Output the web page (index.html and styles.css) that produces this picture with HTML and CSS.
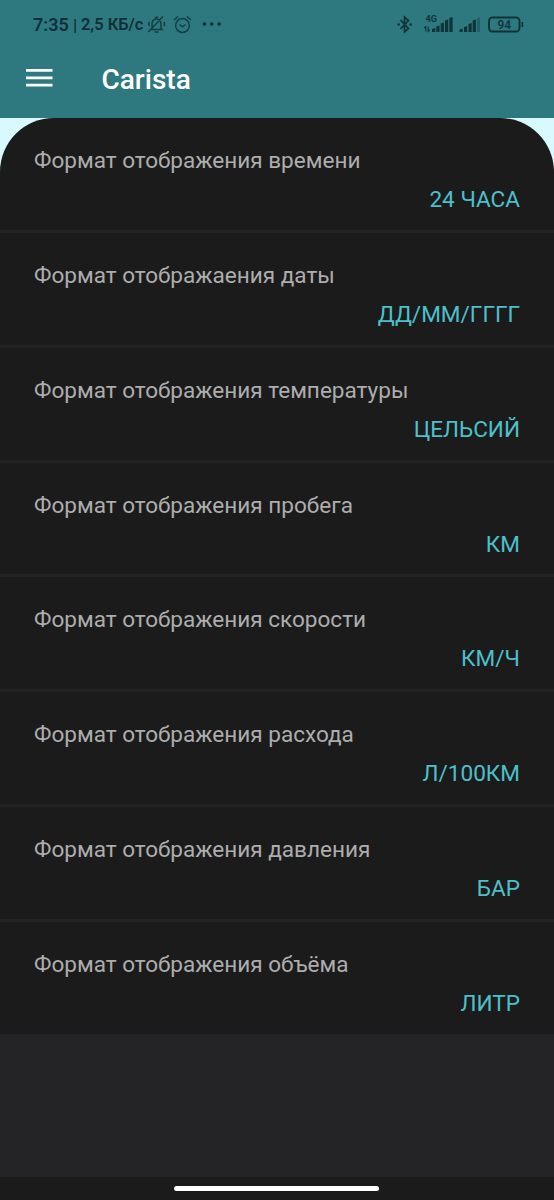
FILE: index.html
```
<!DOCTYPE html>
<html lang="ru">
<head>
<meta charset="utf-8">
<title>Carista</title>
<link rel="stylesheet" href="styles.css">
</head>
<body>
<header class="header">
  <div class="status">
    <span class="clock">7:35</span><span class="bar">|</span><span class="speed">2,5 КБ/с</span>
    <svg class="alerts" width="80" height="24" viewBox="146 13 80 24" fill="none" stroke="#123f44" stroke-width="1.5">
      <path d="M150 29.500h13M152 29.500v-5c0-3.500 1.800-5.500 4.500-5.500s4.500 2 4.500 5.500v5M155 18l1.500-1 1.500 1M154.500 32h4M149.500 22c-1 1-1 3 0 4M163.800 22c1 1 1 3 0 4M148.300 32L163 16.500"/>
      <circle cx="182.500" cy="25.500" r="6.900"/>
      <path d="M179.500 24.500l3 2.300 3-2.300M174 20l4-3.500M191 20l-4-3.500"/>
      <g fill="#102f35" stroke="none"><circle cx="204.500" cy="24" r="1.800"/><circle cx="211.800" cy="24" r="1.800"/><circle cx="219.100" cy="24" r="1.800"/></g>
    </svg>
    <svg class="signals" width="132" height="24" viewBox="394 13 132 24" fill="none" stroke="#0e3339" stroke-width="1.700">
      <path d="M400.500 20l8 8.500-4 3.500V17l4 3.500-8 8.500"/>
      <g fill="#0e3339" stroke="none">
        <circle cx="398.700" cy="24.500" r="1.300"/><circle cx="410.700" cy="24.500" r="1.300"/>
        <text class="network" x="425.500" y="22">4G</text>
        <path d="M432 32v-3l3.200-1v4zM436.300 32v-5.500l3.200-1V32zM440.700 32v-8.500l3.200-1V32zM445 32V20.500l3.200-1V32zM449.400 32V18l3.200-1v15z"/>
        <path d="M459.500 32v-2.500l3.200-1V32zM464 32v-5l3.200-1v6zM468.500 32v-8l3.200-1v9zM472.700 32V20.500l3.200-1V32z"/>
        <path opacity=".35" d="M477 32V18l3-1v15z"/>
        <path d="M521.500 22h1.700v5h-1.700z"/>
        <text class="charge" x="504.200" y="29">94</text>
      </g>
      <path stroke-width="1.100" d="M425.800 31.500v-5l-1.500 1.500M428.200 26.500v5l1.500-1.500"/>
      <rect x="489" y="17.500" width="30.500" height="14" rx="3.500" stroke-width="1.900"/>
    </svg>
  </div>
  <div class="toolbar">
    <svg class="menu" width="27" height="20" viewBox="0 0 27 20" stroke="#fff" stroke-width="2.800"><path d="M0 2.300h26.500M0 9.800h26.500M0 17.200h26.500"/></svg>
    <h1 class="title">Carista</h1>
  </div>
</header>
<main class="content">
  <ul class="settings">
    <li class="row"><span class="label">Формат отображения времени</span><span class="value">24 ЧАСА</span></li>
    <li class="row"><span class="label">Формат отображаения даты</span><span class="value">ДД/ММ/ГГГГ</span></li>
    <li class="row"><span class="label">Формат отображения температуры</span><span class="value">ЦЕЛЬСИЙ</span></li>
    <li class="row"><span class="label">Формат отображения пробега</span><span class="value">КМ</span></li>
    <li class="row"><span class="label">Формат отображения скорости</span><span class="value">КМ/Ч</span></li>
    <li class="row"><span class="label">Формат отображения расхода</span><span class="value">Л/100КМ</span></li>
    <li class="row"><span class="label">Формат отображения давления</span><span class="value">БАР</span></li>
    <li class="row"><span class="label">Формат отображения объёма</span><span class="value">ЛИТР</span></li>
  </ul>
</main>
<footer class="navigation"><span class="handle"></span></footer>
</body>
</html>
```
FILE: styles.css
```
* { box-sizing: border-box; }
body {
  margin: 0;
  height: 1200px;
  display: flex;
  flex-direction: column;
  overflow: hidden;
  background: #1b1b1b;
  font-family: Roboto, "Noto Sans", sans-serif;
}
.header { height: 118px; background: #2e797f; }
.status {
  height: 49px;
  display: flex;
  align-items: center;
  padding: 0 28px 0 33px;
  color: #0e3036;
  font-size: 16.4px;
  font-weight: 600;
  white-space: nowrap;
}
.clock { width: 40px; font-size: 18px; }
.bar { width: 8px; font-size: 17px; font-weight: 500; }
.speed { width: 65px; }
.alerts { flex: none; }
.signals { flex: none; margin-left: auto; }
.network { font-size: 9px; font-weight: 700; }
.charge { font-size: 12px; font-weight: 500; text-anchor: middle; }
.toolbar {
  display: flex;
  align-items: center;
  height: 60px;
  padding-left: 26px;
}
.menu { margin-bottom: 3px; }
.title {
  margin: 1px 0 0 48.5px;
  color: #fff;
  font-size: 28px;
  font-weight: 500;
  line-height: 36px;
}
.content {
  flex: 1;
  background: linear-gradient(#d8f9fd 60px, #242426 60px);
}
.settings {
  margin: 0;
  padding: 0;
  list-style: none;
  overflow: hidden;
  border-radius: 54px 54px 0 0;
  background: #1b1b1b;
}
.row {
  height: 114.85px;
  display: flex;
  flex-direction: column;
  gap: 11px;
  padding: 29px 34px 0;
  border-bottom: 3px solid #242426;
  font-size: 22.55px;
  line-height: 28px;
}
.label { color: #adadad; }
.value { align-self: flex-end; color: #4dc0cb; }
.navigation {
  height: 23px;
  display: flex;
  justify-content: center;
  padding-top: 9px;
  background: #1b1b1b;
}
.handle { width: 205px; height: 5px; margin-right: 1px; border-radius: 3px; background: #fff; }
```
